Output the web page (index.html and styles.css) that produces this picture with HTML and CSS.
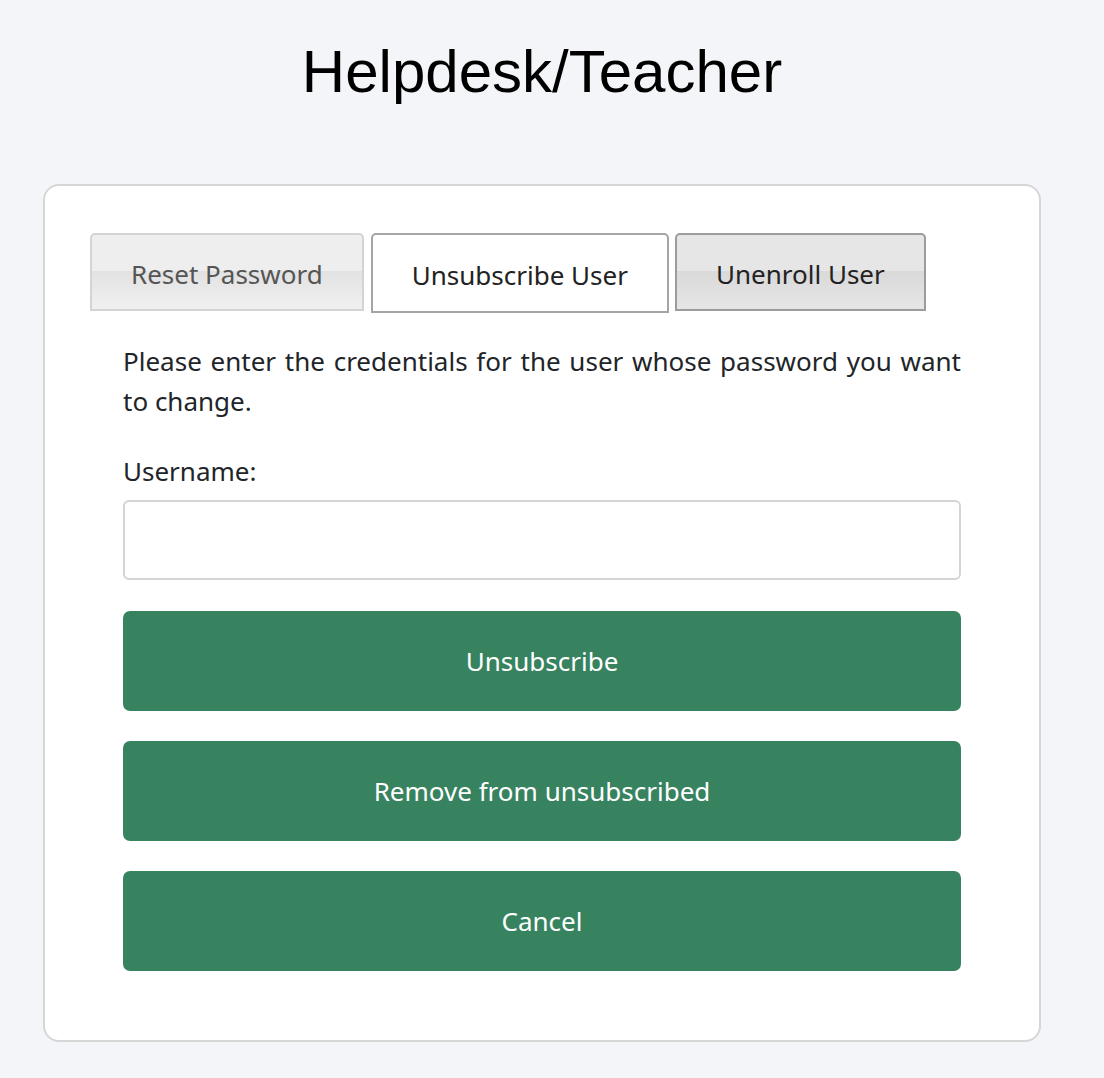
FILE: index.html
```html
<!DOCTYPE html>
<html lang="en">
<head>
  <meta charset="UTF-8">
  <title>Helpdesk/Teacher</title>
  <link rel="stylesheet" href="styles.css">
</head>
<body>

  <div class="page">
    <h1 class="title">Helpdesk/Teacher</h1>

    <div class="card">
      <div class="tabs">
        <button class="tab tab-muted">Reset Password</button>
        <button class="tab tab-active">Unsubscribe User</button>
        <button class="tab tab-dark">Unenroll User</button>
      </div>

      <form class="panel" onsubmit="return false">
        <p class="intro">Please enter the credentials for the user whose password you want to change.</p>

        <label class="label" for="username">Username:</label>
        <input class="field" type="text" id="username">

        <button class="action">Unsubscribe</button>
        <button class="action">Remove from unsubscribed</button>
        <button class="action">Cancel</button>
      </form>
    </div>
  </div>

</body>
</html>
```

FILE: styles.css
```css
body {
  margin: 0;
  background: #f4f5f9;
  font-family: "Noto Sans", "Open Sans", sans-serif;
  font-size: 26px;
  color: #212529;
}

.page {
  width: 1084px;
  padding-bottom: 36px;
}

.title {
  font-family: "Liberation Sans", Arial, sans-serif;
  font-weight: normal;
  font-size: 60px;
  color: #000;
  text-align: center;
  margin: 0;
  padding: 38px 0 78px;
  line-height: 68px;
}

.card {
  width: 998px;
  box-sizing: border-box;
  margin: 0 auto;
  background: #fff;
  border: 2px solid #d6d6d6;
  border-radius: 16px;
  padding: 47px 45px 69px;
}

.tabs {
  display: flex;
  align-items: flex-start;
  gap: 6px;
}

.tab {
  font-family: inherit;
  font-size: 26px;
  height: 78px;
  padding: 3px 39px 0;
  border: 2px solid #cfcfcf;
  border-radius: 5px 5px 0 0;
  background: linear-gradient(#eeeeee 49%, #e2e2e2 49%, #f0f0f0 100%);
  color: #222;
  cursor: pointer;
}

.tab-muted {
  color: #555;
  border-color: #d4d4d4;
}

.tab-active {
  background: #fff;
  height: 80px;
  border-color: #a5a5a5;
  margin-left: 1px;
}

.tab-dark {
  border-color: #9c9c9c;
  background: linear-gradient(#e6e6e6 49%, #d9d9d9 49%, #e6e6e6 100%);
}

.panel {
  display: flex;
  flex-direction: column;
  padding: 0 33px;
}

.intro {
  line-height: 40px;
  text-align: justify;
  margin: 28px 0 30px;
}

.label {
  line-height: 40px;
  margin-bottom: 9px;
}

.field {
  height: 80px;
  box-sizing: border-box;
  border: 2px solid #d4d4d4;
  border-radius: 6px;
  font-family: inherit;
  font-size: 26px;
  padding: 0 16px;
  margin-bottom: 31px;
}

.action {
  height: 100px;
  border: none;
  border-radius: 7px;
  background: #37835f;
  color: #fff;
  font-family: inherit;
  font-size: 26px;
  cursor: pointer;
  margin-bottom: 30px;
}

.action:last-child {
  margin-bottom: 0;
}

.action:hover {
  background: #2e7051;
}
```
